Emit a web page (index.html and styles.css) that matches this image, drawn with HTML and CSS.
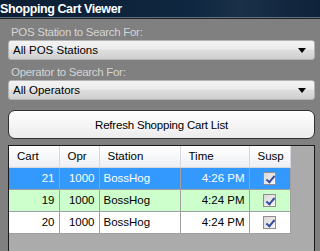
FILE: index.html
```html
<!DOCTYPE html>
<html lang="en">

<head>
  <meta charset="UTF-8" />
  <title>Shopping Cart Viewer</title>
  <link rel="stylesheet" href="styles.css">
</head>

<body>
  <div class="viewer">
    <div class="title-bar">Shopping Cart Viewer</div>

    <div class="form">
      <label class="field-label">POS Station to Search For:</label>
      <div class="combo">
        <span>All POS Stations</span>
        <span class="arrow"></span>
      </div>

      <label class="field-label">Operator to Search For:</label>
      <div class="combo">
        <span>All Operators</span>
        <span class="arrow"></span>
      </div>

      <button class="refresh">Refresh Shopping Cart List</button>

      <div class="grid">
        <table>
          <thead>
            <tr>
              <th class="c-cart">Cart</th>
              <th class="c-opr">Opr</th>
              <th class="c-station">Station</th>
              <th class="c-time">Time</th>
              <th class="c-susp">Susp</th>
            </tr>
          </thead>
          <tbody>
            <tr class="selected">
              <td class="num">21</td>
              <td class="num">1000</td>
              <td>BossHog</td>
              <td class="num">4:26 PM</td>
              <td class="check"><span class="box"></span></td>
            </tr>
            <tr class="alt">
              <td class="num">19</td>
              <td class="num">1000</td>
              <td>BossHog</td>
              <td class="num">4:24 PM</td>
              <td class="check"><span class="box"></span></td>
            </tr>
            <tr>
              <td class="num">20</td>
              <td class="num">1000</td>
              <td>BossHog</td>
              <td class="num">4:24 PM</td>
              <td class="check"><span class="box"></span></td>
            </tr>
          </tbody>
        </table>
      </div>
    </div>
  </div>
</body>

</html>
```

FILE: styles.css
```css
* {
  box-sizing: border-box;
}

body {
  margin: 0;
  background: #808080;
  font-family: "Liberation Sans", Arial, sans-serif;
  font-size: 11px;
  overflow: hidden;
}

.viewer {
  width: 320px;
  height: 251px;
  display: flex;
  flex-direction: column;
}

.title-bar {
  height: 19px;
  padding: 1px 0 0 0;
  background: linear-gradient(90deg, #0c1e34 0%, #0f2740 60%, #1a3049 75%, #0e2239 100%);
  border-bottom: 1px solid #222;
  box-shadow: inset 0 -1px 0 #5c6f83;
  color: #fff;
  font-weight: bold;
  font-size: 12.5px;
  letter-spacing: -0.4px;
  line-height: 16px;
}

.form {
  flex: 1;
  display: flex;
  flex-direction: column;
  padding: 5px 5px 0 8px;
}

.field-label {
  height: 16px;
  padding: 1px 0 0 3px;
  font-size: 11.5px;
  letter-spacing: -0.3px;
  line-height: 14px;
  color: #d4d4d4;
}

.combo {
  height: 20px;
  margin-bottom: 4px;
  display: flex;
  align-items: center;
  justify-content: space-between;
  padding: 0 8px 0 4px;
  background: linear-gradient(#f3f3f3 0%, #ececec 45%, #dedede 50%, #d0d0d0 100%);
  border: 1px solid #b4b4b4;
  border-radius: 3px;
  font-size: 11.5px;
  color: #000;
}

.arrow {
  width: 0;
  height: 0;
  border-left: 4px solid transparent;
  border-right: 4px solid transparent;
  border-top: 5px solid #000;
}

.refresh {
  margin-top: 6px;
  height: 29px;
  border: 1px solid #303030;
  border-radius: 7px;
  background: linear-gradient(#ffffff, #ececec);
  font-family: inherit;
  font-size: 11.5px;
  letter-spacing: -0.2px;
  color: #000;
  padding: 0;
}

.grid {
  flex: 1;
  margin-top: 6px;
  background: #ababab;
  border: 1px solid #1a1a1a;
  border-bottom: none;
}

table {
  border-collapse: collapse;
  table-layout: fixed;
  width: 281px;
}

th {
  height: 21px;
  font-weight: normal;
  text-align: left;
  padding: 0 0 0 8px;
  background: linear-gradient(#ffffff 0%, #f7f8fa 50%, #eceef2 100%);
  border-right: 1px solid #d5d8de;
  border-bottom: 1px solid #d5d8de;
  font-size: 11.5px;
  color: #000;
}

.c-cart { width: 50px; }
.c-opr { width: 40px; }
.c-station { width: 81px; }
.c-time { width: 69px; }
.c-susp { width: 41px; }

td {
  height: 22px;
  padding: 0 4px;
  border-right: 1px solid #a0a0a0;
  border-bottom: 1px solid #a0a0a0;
  background: #fff;
  font-size: 11.5px;
  color: #000;
}

td.num {
  text-align: right;
}

tr.selected td {
  background: #3399ff;
  color: #fff;
}

tr.alt td {
  background: #ccffcc;
}

td.check {
  text-align: center;
  padding: 0;
}

.box {
  display: inline-block;
  width: 13px;
  height: 13px;
  vertical-align: middle;
  border: 1px solid #8f8f8f;
  background: linear-gradient(135deg, #d8d8d8, #f8f8f8);
  position: relative;
}

.box::after {
  content: "";
  position: absolute;
  left: 4px;
  top: 1px;
  width: 3px;
  height: 7px;
  border-right: 2px solid #3a4da0;
  border-bottom: 2px solid #3a4da0;
  transform: rotate(40deg);
}
```
